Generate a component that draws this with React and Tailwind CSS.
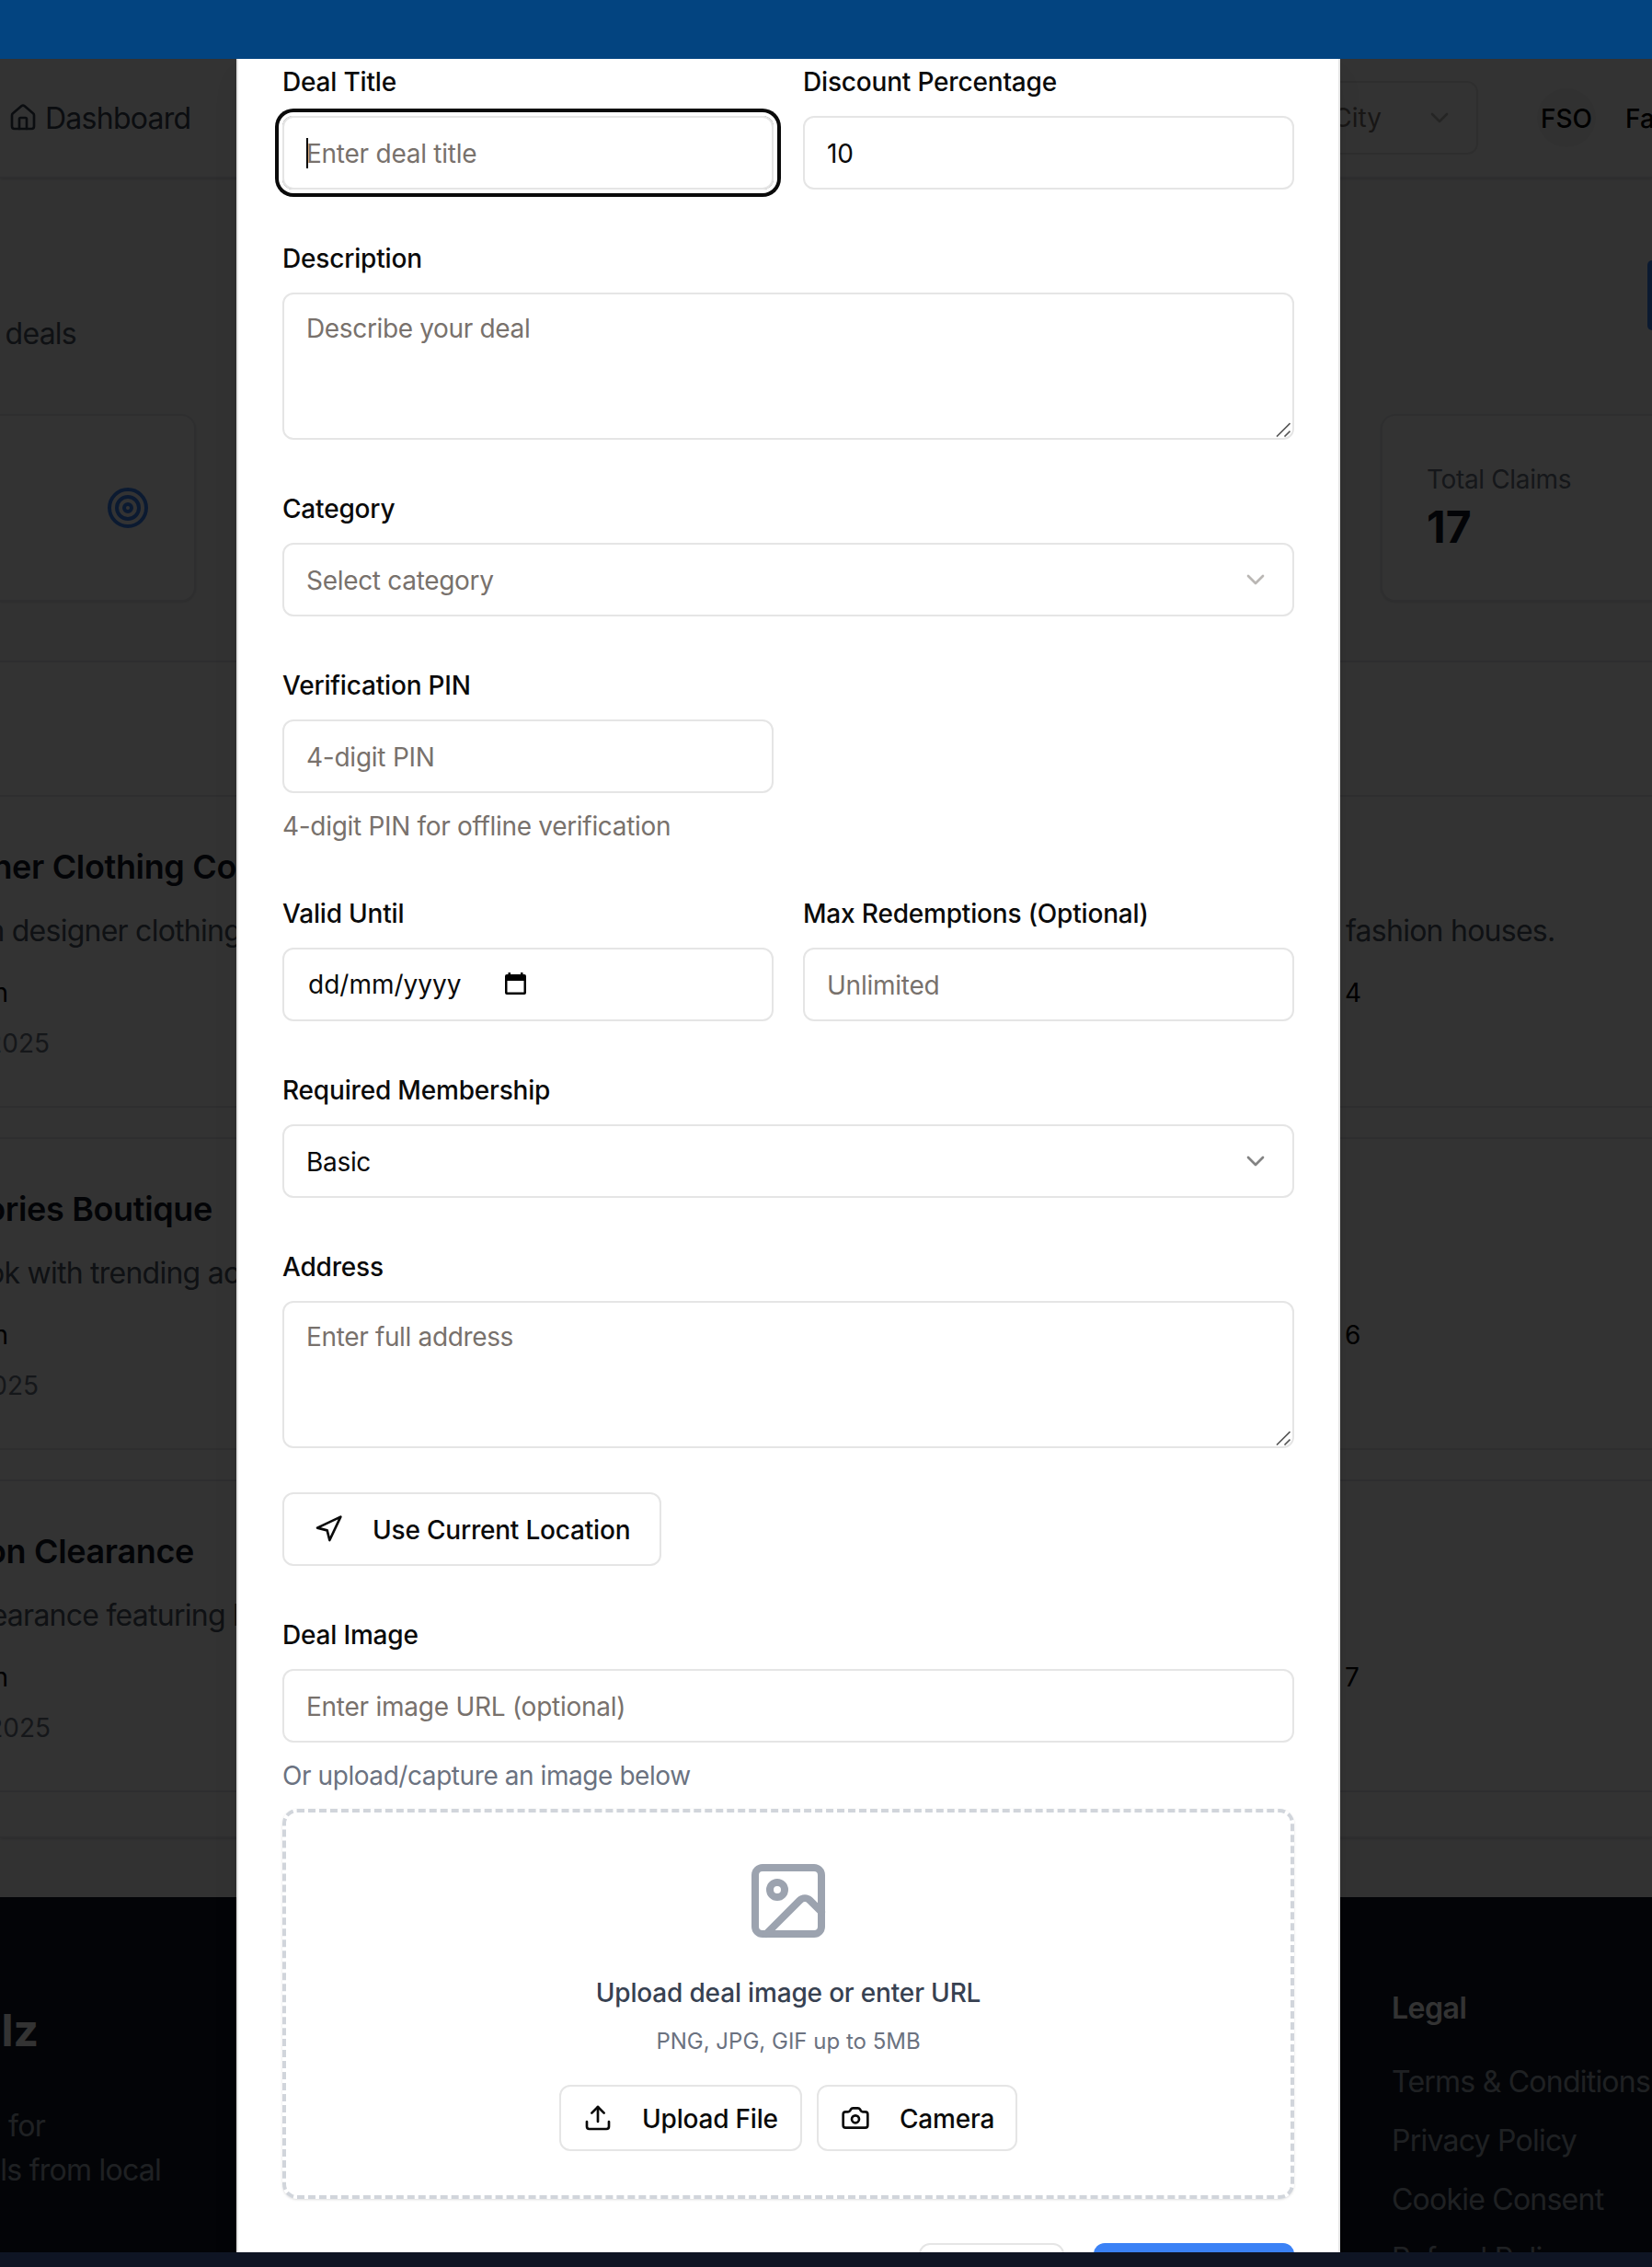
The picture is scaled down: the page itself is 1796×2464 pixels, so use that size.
import React from "react";
import { Camera, ChevronDown, House, Image as ImageIcon, Target, Upload } from "lucide-react";

const fieldClass =
  "block w-full h-20 rounded-[12px] border-2 border-[#e5e5e5] bg-white px-6 pt-[2px] text-[28px] leading-[40px] tracking-[-0.25px] text-[#0a0a0a] placeholder:text-[#78716c] outline-none";

function Label({ children }) {
  return (
    <div className="mb-4 h-12 pt-[2px] text-[32px] leading-[48px] whitespace-nowrap">
      <label className="text-[28px] leading-none font-medium tracking-[-0.18px] text-[#0a0a0a]">{children}</label>
    </div>
  );
}

function Field({ label, className = "", children }) {
  return (
    <div className={className}>
      <Label>{label}</Label>
      {children}
    </div>
  );
}

function TextArea({ placeholder }) {
  return (
    <div className="relative h-40">
      <textarea
        readOnly
        placeholder={placeholder}
        className="block w-full h-40 resize-none rounded-[12px] border-2 border-[#e5e5e5] bg-white px-6 pt-[17px] pb-4 text-[28px] leading-[40px] tracking-[-0.35px] placeholder:text-[#78716c] outline-none overflow-hidden"
      />
      <svg className="absolute right-1 bottom-[3px]" width="16" height="16" viewBox="0 0 16 16" stroke="#555" strokeWidth="1.6">
        <path d="M1 15.5 15.5 1M9.5 15.5l6-6" />
      </svg>
    </div>
  );
}

function SelectBox({ children, muted }) {
  return (
    <div
      className={
        "flex h-20 items-center justify-between rounded-[12px] border-2 border-[#e5e5e5] px-6 text-[28px] leading-[40px] tracking-[-0.31px] " +
        (muted ? "text-[#78716c]" : "text-[#0a0a0a]")
      }
    >
      <span className="pt-[1px]">{children}</span>
      <ChevronDown className="size-8 opacity-50" />
    </div>
  );
}

function DealRow({ title, titleW, text, textW, date, dateW, rest, count }) {
  return (
    <div className="h-[340px] border-y-2 border-[#e5e7eb] bg-white pt-[48px] whitespace-nowrap">
      <div className={"flex h-14 items-center justify-end text-[36px] font-semibold tracking-[-0.35px] text-[#111827] " + titleW}>{title}</div>
      <div className="mt-[18px] flex h-12 items-center text-[32px] tracking-[-0.75px] text-[#4b5563]">
        <div className={"flex shrink-0 justify-end " + textW}>{text}</div>
        <div className="ml-auto w-[333px] shrink-0">{rest}</div>
      </div>
      <div className="mt-[23px] flex h-10 items-center text-[28px] text-black">
        <div className="flex w-[9px] justify-end">Fashion</div>
        <div className="ml-auto w-[334px]">{count}</div>
      </div>
      <div className={"mt-[15px] flex h-10 items-center justify-end text-[28px] text-[#6b7280] " + dateW}>{date}</div>
    </div>
  );
}

function PageBehind() {
  return (
    <div className="flex h-[2384px] w-full flex-col overflow-hidden bg-[#f9fafb]">
      <header className="flex h-[130px] shrink-0 items-center border-b-2 border-[#e5e7eb] bg-white whitespace-nowrap shadow-sm">
        <div className="ml-[9px] flex items-center gap-2 text-[32px] tracking-[-0.75px] text-[#374151]">
          <House className="size-8" />
          <span className="pt-[2px]">Dashboard</span>
        </div>
        <div className="ml-[50px] h-[6px] w-[10px] -translate-y-[4px] rounded-l-full bg-[#3b82f6]" />
        <div className="ml-auto flex h-20 w-[360px] items-center justify-between rounded-[12px] border-2 border-[#e5e5e5] px-6 text-[28px] text-[#78716c]">
          <span className="w-[229px] text-right">Select City</span>
          <ChevronDown className="size-8 opacity-50" />
        </div>
        <div className="ml-16 flex w-[125px] items-center text-[28px] font-medium text-black">
          <div className="flex size-16 shrink-0 items-center justify-center rounded-full bg-[#f5f5f5] pt-[1px]">FSO</div>
          <span className="ml-[32px] pt-[1px]">Fashion</span>
        </div>
      </header>

      <div className="flex h-[256px] shrink-0 items-start justify-between text-[32px] tracking-[-0.75px] text-[#4b5563]">
        <div className="mt-[145px] flex h-12 w-[83px] items-center justify-end whitespace-nowrap">your deals</div>
        <div className="mt-[89px] h-[76px] w-[5px] rounded-l-[8px] bg-[#3b82f6]" />
      </div>

      <div className="flex h-[204px] shrink-0 justify-between">
        <div className="flex w-[213px] items-center justify-end rounded-r-[16px] border-y-2 border-r-2 border-[#e5e7eb] bg-white pr-12 shadow-sm">
          <Target className="size-12 text-[#3b82f6]" />
        </div>
        <div className="w-[295px] rounded-l-[16px] border-y-2 border-l-2 border-[#e5e7eb] bg-white py-12 pl-12 shadow-sm">
          <div className="pt-[1px] text-[28px] leading-[40px] tracking-[-0.35px] text-[#6b7280]">Total Claims</div>
          <div className="text-[48px] leading-[64px] font-bold text-[#111827]">17</div>
        </div>
      </div>

      <section className="mt-16 flex h-[1280px] shrink-0 flex-col gap-8 border-y-2 border-[#e5e7eb] bg-white pt-36 shadow-sm">
        <DealRow title="Designer Clothing Co" titleW="w-[257px]" text="Premium designer clothing" textW="w-[262px]" date="31/12/2025" dateW="w-[54px]" rest="fashion houses." count="4" />
        <DealRow title="Accessories Boutique" titleW="w-[231px]" text="Complete your look with trending acc" textW="w-[278px]" date="15/11/2025" dateW="w-[42px]" count="6" />
        <DealRow title="Season Clearance" titleW="w-[211px]" text="Clearance featuring l" textW="w-[260px]" date="30/09/2025" dateW="w-[55px]" count="7" />
      </section>

      <footer className="mt-16 flex h-[386px] shrink-0 justify-between overflow-hidden bg-[#111827] text-[32px] whitespace-nowrap text-[#9ca3af]">
        <div className="pt-[113px]">
          <div className="flex h-16 w-[42px] items-center justify-end text-[48px] font-bold text-white">Dealz</div>
          <div className="mt-12 flex h-12 w-[49px] items-center justify-end tracking-[-0.75px]">platform for</div>
          <div className="flex h-12 w-[175px] items-center justify-end tracking-[-0.75px]">deals from local</div>
        </div>
        <div className="w-[283px] pt-[97px]">
          <div className="h-12 leading-[48px] font-semibold tracking-[-0.5px] text-white">Legal</div>
          <div className="mt-8 flex flex-col gap-4 leading-[48px] tracking-[-0.77px]">
            <div>Terms &amp; Conditions</div>
            <div>Privacy Policy</div>
            <div>Cookie Consent</div>
            <div>Refund Policy</div>
          </div>
        </div>
      </footer>
    </div>
  );
}

function DealDialog() {
  return (
    <div className="h-[2500px] w-[1200px] border-x-2 border-[#e5e5e5] bg-white px-12 shadow-[0_20px_30px_-6px_rgba(0,0,0,0.1),0_8px_12px_-8px_rgba(0,0,0,0.1)]">
      <form className="-mt-[2px] flex flex-col gap-12">
        <div className="grid grid-cols-2 gap-8">
          <Field label="Deal Title">
            <div className="relative rounded-[12px] ring-4 ring-[#0a0a0a] ring-offset-4 ring-offset-white">
              <input readOnly placeholder="Enter deal title" className={fieldClass} />
              <span className="absolute top-6 left-[26px] h-[33px] w-[2px] bg-black" />
            </div>
          </Field>
          <Field label="Discount Percentage">
            <input readOnly value="10" className={fieldClass} />
          </Field>
        </div>

        <Field label="Description">
          <TextArea placeholder="Describe your deal" />
        </Field>

        <Field label="Category">
          <SelectBox muted>Select category</SelectBox>
        </Field>

        <Field label="Verification PIN" className="w-[534px]">
          <input readOnly placeholder="4-digit PIN" className={fieldClass} />
          <p className="mt-4 text-[28px] leading-[40px] tracking-[-0.31px] text-[#78716c]">4-digit PIN for offline verification</p>
        </Field>

        <div className="grid grid-cols-2 gap-8">
          <Field label="Valid Until">
            <div className="flex h-20 items-center rounded-[12px] border-2 border-[#e5e5e5] px-6 text-[28px] leading-[40px] text-[#0a0a0a]">
              <span className="w-[215px] pl-[2px]">dd/mm/yyyy</span>
              <svg className="-mt-[3px]" width="26" height="26" viewBox="0 0 26 26">
                <path d="M4.500 1h2.500v2h11V1h2.500v2h1.500q2 0 2 2v18q0 2-2 2h-19q-2 0-2-2V5q0-2 2-2H4.500zM3.500 10v12.500h18V10z" fill="#000" fillRule="evenodd" />
              </svg>
            </div>
          </Field>
          <Field label="Max Redemptions (Optional)">
            <input readOnly placeholder="Unlimited" className={fieldClass} />
          </Field>
        </div>

        <Field label="Required Membership">
          <SelectBox>Basic</SelectBox>
        </Field>

        <Field label="Address">
          <TextArea placeholder="Enter full address" />
        </Field>

        <button type="button" className="flex h-20 w-[412px] items-center gap-8 rounded-[12px] border-2 border-[#e5e5e5] px-8 text-[28px] font-medium tracking-[-0.2px] whitespace-nowrap text-[#0a0a0a]">
          <svg className="size-8 shrink-0" viewBox="0 0 24 24" fill="none" stroke="currentColor" strokeWidth="2" strokeLinecap="round" strokeLinejoin="round">
            <polygon points="3 11 22 2 13 21 11 13 3 11" />
          </svg>
          <span className="pt-[1px]">Use Current Location</span>
        </button>

        <Field label="Deal Image">
          <input readOnly placeholder="Enter image URL (optional)" className={fieldClass} />
          <p className="mt-4 text-[28px] leading-[40px] tracking-[-0.43px] text-[#6b7280]">Or upload/capture an image below</p>
          <div className="mt-4 flex h-[424px] flex-col items-center rounded-[16px] border-4 border-dashed border-[#d1d5db] p-12 shadow-sm">
            <ImageIcon className="size-24 text-[#9ca3af]" />
            <p className="mt-8 pt-[1px] text-[28px] leading-[39px] font-medium tracking-[-0.17px] text-[#374151]">Upload deal image or enter URL</p>
            <p className="mt-[17px] text-[24px] leading-[32px] text-[#6b7280]">PNG, JPG, GIF up to 5MB</p>
            <div className="mt-[31px] flex gap-4 text-[28px] font-medium tracking-[-0.2px] whitespace-nowrap text-[#0a0a0a]">
              <button type="button" className="flex h-[72px] w-[264px] items-center gap-8 rounded-[12px] border-2 border-[#e5e5e5] px-6">
                <Upload className="size-8 shrink-0" />
                <span className="pt-[1px]">Upload File</span>
              </button>
              <button type="button" className="flex h-[72px] w-[218px] items-center gap-8 rounded-[12px] border-2 border-[#e5e5e5] px-6">
                <Camera className="size-8 shrink-0" />
                <span className="pt-[1px]">Camera</span>
              </button>
            </div>
          </div>
        </Field>

        <div className="flex justify-end gap-8">
          <div className="h-20 w-[158px] rounded-[12px] border-2 border-[#e5e5e5]" />
          <div className="h-20 w-[218px] rounded-[12px] bg-[#3b82f6]" />
        </div>
      </form>
    </div>
  );
}

export default function App() {
  return (
    <div className="flex h-[2464px] w-[1796px] flex-col overflow-hidden font-['Inter',sans-serif]">
      <div className="h-16 shrink-0 bg-[#034480]" />
      <main className="relative h-[2384px] shrink-0 overflow-hidden">
        <PageBehind />
        <div className="absolute inset-0 overflow-hidden bg-black/80 pl-[257px]">
          <DealDialog />
        </div>
      </main>
      <div className="h-4 shrink-0 bg-[#0f1524]" />
    </div>
  );
}
